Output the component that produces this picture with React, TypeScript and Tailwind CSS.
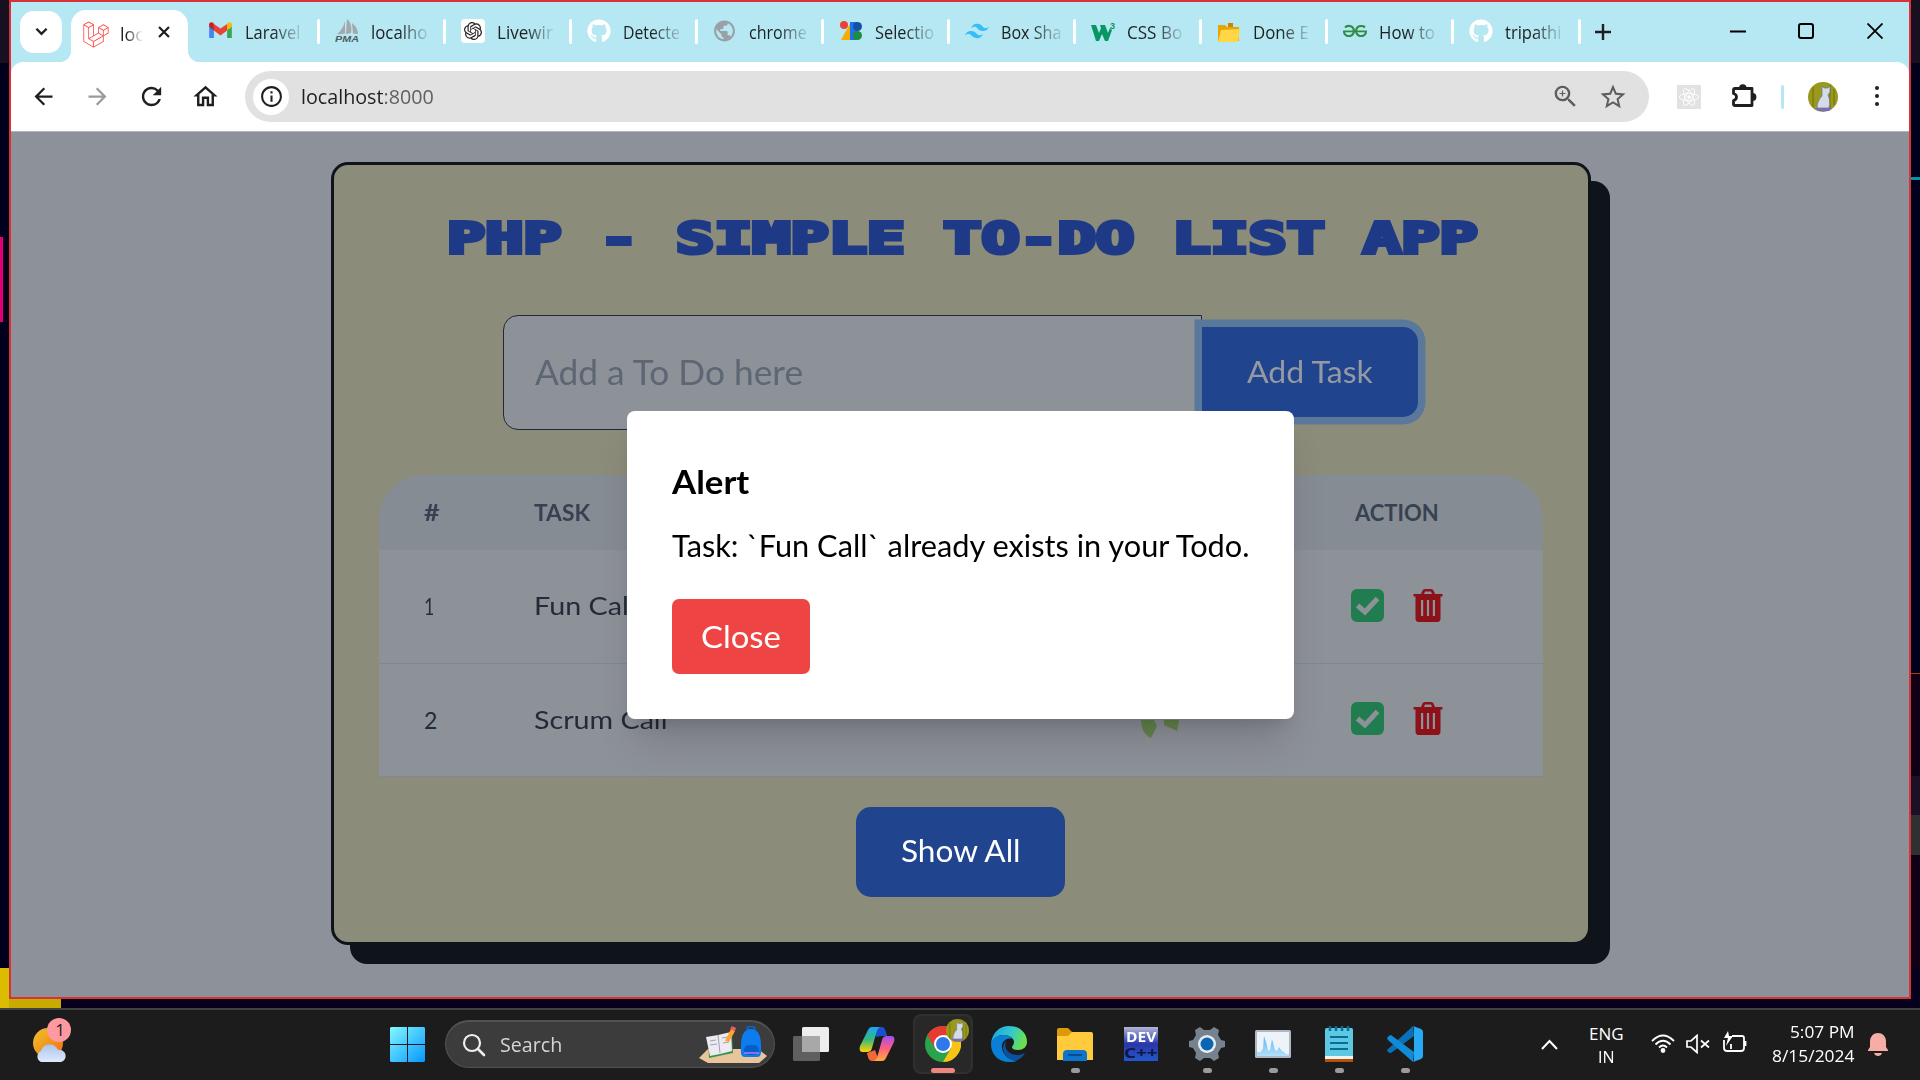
import React, { useLayoutEffect, useRef } from "react";
import { FaLaravel, FaGithub, FaReact } from "react-icons/fa";
import { SiOpenai, SiTailwindcss, SiGeeksforgeeks } from "react-icons/si";
import { MdArrowBack, MdArrowForward, MdRefresh, MdOutlineHome, MdOutlineInfo, MdOutlineZoomIn, MdStarBorder, MdPublic } from "react-icons/md";

const UI = "font-['Open_Sans','Noto_Sans',sans-serif]";

/* Text stretched horizontally so that it fills the width of its box. */
function Fit({ children, className = "" }: { children: React.ReactNode; className?: string }) {
  const outer = useRef<HTMLSpanElement>(null);
  const inner = useRef<HTMLSpanElement>(null);
  useLayoutEffect(() => {
    if (outer.current && inner.current) {
      inner.current.style.transform = `scaleX(${outer.current.clientWidth / inner.current.offsetWidth})`;
    }
  }, []);
  return (
    <span ref={outer} className={`block shrink-0 whitespace-nowrap ${className}`}>
      <span ref={inner} className="inline-block origin-left">{children}</span>
    </span>
  );
}

const Gmail = () => (
  <svg viewBox="0 0 24 18" className="w-[23px] h-[17px]">
    <path d="M0 3v14h5V7z" fill="#4285f4" />
    <path d="M24 3v14h-5V7z" fill="#34a853" />
    <path d="M19 2.2V9l5-4V2.5C24 .3 21.500-.5 19.800.900z" fill="#fbbc04" />
    <path d="M5 9V2l7 5 7-5v7l-7 5.300z" fill="#ea4335" />
    <path d="M0 2.500V5l5 4V2L4.200.900C2.500-.5 0 .3 0 2.500z" fill="#c5221f" />
  </svg>
);

const PhpMyAdmin = () => (
  <svg viewBox="0 0 24 24" className="w-6 h-6">
    <path d="M10 2C9 7 6 12 2 15.500l8-1zM12 0c4 3 5 9 4 14l-5 1zM17 4c4 3 6 7 6 11l-5-.5z" fill="#a4a8aa" />
    <text x="0" y="23" fontSize="9.500" fontWeight="bold" fontStyle="italic" fill="#555b5e" textLength="24" lengthAdjust="spacingAndGlyphs" fontFamily="Liberation Sans">PMA</text>
  </svg>
);

const Web = () => (
  <svg viewBox="0 0 24 24" className="w-6 h-6">
    <circle cx="5" cy="6" r="4" fill="#ea4335" />
    <path d="M2 21 12 3v18z" fill="#f9ab00" />
    <path d="M11 3h7v18h-7z" fill="#1a73e8" />
    <circle cx="18.500" cy="7.500" r="4.500" fill="#174ea6" />
    <circle cx="18.500" cy="16.500" r="4.500" fill="#1e8e3e" />
  </svg>
);

const W3 = () => (
  <svg viewBox="0 0 24 20" className="w-6 h-5">
    <path d="M0 4h5l3 8 2-5-1-3h5l3 8 2-5 2 2-4 11h-3l-3-7-3 7H5z" fill="#059862" />
    <text x="19" y="8" fontSize="9" fontWeight="bold" fill="#059862" fontFamily="Liberation Sans">3</text>
  </svg>
);

const Folder = () => (
  <svg viewBox="0 0 24 20" className="mt-1 w-6 h-5">
    <path d="M1 2h7l2 2h12v14H1z" fill="#e8a400" />
    <path d="M11 0h5v4h-5z" fill="#c98800" />
    <path d="m4 7 19-1-2 13H1z" fill="#ffd645" />
  </svg>
);

const tabs = [
  { name: "Laravel", icon: <Gmail />, w: "w-[55px]" },
  { name: "localho", icon: <PhpMyAdmin />, w: "w-[56px]" },
  { name: "Livewir", icon: <span className="flex w-6 h-6 items-center justify-center rounded bg-white"><SiOpenai className="w-[18px] h-[18px] text-[#222]" /></span>, w: "w-[56px]" },
  { name: "Detecte", icon: <FaGithub className="w-6 h-6 text-white" />, w: "w-[57px]" },
  { name: "chrome", icon: <MdPublic className="w-[26px] h-[26px] -ml-px text-[#9aa0a6]" />, w: "w-[58px]" },
  { name: "Selectio", icon: <Web />, w: "w-[59px]" },
  { name: "Box Sha", icon: <SiTailwindcss className="w-6 h-6 text-[#38bdf8]" />, w: "w-[60px]" },
  { name: "CSS Bo", icon: <W3 />, w: "w-[55px]" },
  { name: "Done E", icon: <Folder />, w: "w-[56px]" },
  { name: "How to", icon: <SiGeeksforgeeks className="w-6 h-6 text-[#2f8d46]" />, w: "w-[56px]" },
  { name: "tripathi", icon: <FaGithub className="w-6 h-6 text-white" />, w: "w-[56px]" },
];

const Cat = ({ className }: { className: string }) => (
  <svg viewBox="0 0 30 30" className={className}>
    <circle cx="15" cy="15" r="15" fill="#99991c" />
    <path d="M5 5v20M22 3v24M26 7v16" stroke="#7d7d10" strokeWidth="1.500" />
    <path d="m14 4 2 2h4l2-2v6l-2 3c2 4 2 8 1 13H9c0-5 2-9 5-12z" fill="#d5dce8" stroke="#6f7f95" strokeWidth=".8" />
    <path d="M7 26h17l-3 3H10z" fill="#7a6cc4" />
  </svg>
);

function TabStrip() {
  return (
    <div className="flex h-[60px] bg-[#b5e8f3] text-[#1f1f1f]">
      <div className="ml-[9px] mt-[9px] flex h-[42px] w-[42px] items-center justify-center rounded-[14px] bg-white">
        <svg viewBox="0 0 14 10" className="w-[13px] h-[10px]"><path d="m1.500 1.500 5.500 5.500 5.500-5.500" fill="none" stroke="#1f1f1f" strokeWidth="2.600" /></svg>
      </div>
      <div className="relative ml-[9px] mt-2 flex h-[52px] w-[117px] items-center rounded-t-[15px] bg-white pl-[12px]">
        <div className="absolute -left-3 bottom-0 h-3 w-3 bg-[radial-gradient(circle_at_0_0,#b5e8f3_12px,#fff_12.500px)]" />
        <div className="absolute -right-3 bottom-0 h-3 w-3 bg-[radial-gradient(circle_at_100%_0,#b5e8f3_12px,#fff_12.500px)]" />
        <FaLaravel className="-mt-1 h-[27px] w-[26px] text-[#ff4a3f]" />
        <Fit className="ml-[11px] w-[24px] -mt-[3px] text-[18px] [mask-image:linear-gradient(90deg,#000_25%,transparent_95%)]">loc</Fit>
        <svg viewBox="0 0 12 12" className="-mt-[8px] ml-[14px] h-3 w-3"><path d="m1 1 10 10M11 1 1 11" stroke="#1f1f1f" strokeWidth="2.200" /></svg>
      </div>
      <div className="ml-[19px] flex">
        {tabs.map((t) => (
          <div key={t.name} className="flex h-[60px] w-[126.050px] items-center">
            <div className="-mt-[3px] ml-[2px] flex w-6 shrink-0 items-center">{t.icon}</div>
            <Fit className={`mt-px ml-3 overflow-hidden text-[18px] [mask-image:linear-gradient(90deg,#000_50%,transparent_108%)] ${t.w}`}>{t.name}</Fit>
            <div className="-mt-[2px] ml-auto mr-[13px] h-[25px] w-[3px] rounded bg-white" />
          </div>
        ))}
      </div>
      <svg viewBox="0 0 16 16" className="mt-[22px] h-4 w-4 ml-[1px]"><path d="M8 0v16M0 8h16" stroke="#1f1f1f" strokeWidth="2.400" /></svg>
      <svg viewBox="0 0 16 16" className="ml-auto mt-[21px] h-4 w-4"><path d="M0 8.500h16" stroke="#000" strokeWidth="2" /></svg>
      <svg viewBox="0 0 16 16" className="ml-[52px] mt-[21px] h-4 w-4"><rect x="1" y="1" width="14" height="14" rx="2" fill="none" stroke="#000" strokeWidth="2" /></svg>
      <svg viewBox="0 0 16 16" className="ml-[53px] mr-[26px] mt-[21px] h-4 w-4"><path d="m.5.5 15 15M15.500.5l-15 15" stroke="#000" strokeWidth="1.800" /></svg>
    </div>
  );
}

const Puzzle = () => (
  <svg viewBox="0 0 26 26" className="ml-[30px] h-[26px] w-[26px]">
    <path d="M4 4.500h17v17H4q-1.500 0-1.500-1.500v-3.500q3-.8 3-3.500t-3-3.500V6Q2.500 4.500 4 4.500z" fill="none" stroke="#1f1f1f" strokeWidth="2.800" strokeLinejoin="round" />
    <path d="M8 4a3.800 3.800 0 0 1 7.600 0zM21.500 9a3.800 3.800 0 0 1 0 7.800z" fill="#1f1f1f" />
  </svg>
);

function Toolbar() {
  return (
    <div className="bg-[#b5e8f3]">
      <div className="flex h-[69px] items-center rounded-t-xl bg-white text-[#1f1f1f]">
        <MdArrowBack className="ml-[19px] h-[27px] w-[27px]" />
        <MdArrowForward className="ml-[27px] h-[27px] w-[27px] text-[#9b9b9b]" />
        <MdRefresh className="ml-[26px] h-[29px] w-[29px]" />
        <MdOutlineHome className="ml-[25px] h-[29px] w-[29px]" />
        <div className="ml-[25px] flex h-[51px] w-[1404px] items-center rounded-full bg-[#e1e1e1] pl-2">
          <div className="flex h-[36px] w-[36px] items-center justify-center rounded-full bg-white"><MdOutlineInfo className="h-[25px] w-[25px]" /></div>
          <Fit className={`ml-3 w-[133px] text-[20px] ${UI}`}>localhost<span className="text-[#5f6062]">:8000</span></Fit>
          <MdOutlineZoomIn className="ml-auto h-[29px] w-[29px] text-[#5c5e61]" />
          <MdStarBorder className="ml-[18px] mr-[21px] h-[30px] w-[30px] text-[#5c5e61]" />
        </div>
        <div className="ml-[28px] flex h-6 w-6 items-center justify-center bg-[#e2e2e2]"><FaReact className="h-5 w-5 text-white" /></div>
        <Puzzle />
        <div className="ml-[24px] h-6 w-[3px] rounded bg-[#b5e8f3]" />
        <Cat className="ml-[24px] h-[30px] w-[30px]" />
        <div className="ml-[37px] -mt-[2px] flex flex-col gap-[4px]">
          <i className="h-[4px] w-[4px] rounded-full bg-[#1f1f1f]" /><i className="h-[4px] w-[4px] rounded-full bg-[#1f1f1f]" /><i className="h-[4px] w-[4px] rounded-full bg-[#1f1f1f]" />
        </div>
      </div>
    </div>
  );
}

const Check = () => (
  <svg viewBox="0 0 33 33" className="-mt-[2px] ml-[4px] h-[33px] w-[33px]">
    <rect width="33" height="33" rx="6" fill="#217d4f" />
    <path d="m6.500 16.500 7.500 6.500L26.500 9.500" fill="none" stroke="#8d9198" strokeWidth="5" />
  </svg>
);

const Trash = () => (
  <svg viewBox="0 0 30 33" className="-mt-[2px] ml-[29px] h-[33px] w-[30px]">
    <path fillRule="evenodd" fill="#8d1119" d="M8 5 9.500 1.500Q10 0 12 0h6q2 0 2.500 1.500L22 5h7.500v2.500H27.500V29q0 4-3 4h-19q-3 0-3-4V7.500H.5V5zM11 5h8l-1-2.500h-6zM8 11v16h2.200V11zm5.900 0v16h2.200V11zm5.900 0v16H22V11z" />
  </svg>
);

const rows = [
  { n: "1", nw: "w-[10px]", task: "Fun Call", w: "w-[101px]", mark: false },
  { n: "2", nw: "w-[13px]", task: "Scrum Call", w: "w-[133px]", mark: true },
];

function TodoCard() {
  return (
    <div className="mt-[30px] ml-[320px] h-[783px] w-[1260px] rounded-[17px] border-[3px] border-[#0f141b] bg-[#8c8c7b] shadow-[19px_19px_0_0_#0f141b]">
      <h1 className="ml-[113px] mt-[44px] h-[61px] font-['DejaVu_Sans_Mono',monospace] text-[42px] leading-[60px] font-bold text-[#1e3a87] [-webkit-text-stroke:4px_#1e3a87]">
        <Fit className="w-[1031px]">PHP - SIMPLE TO-DO LIST APP</Fit>
      </h1>
      <div className="ml-[169px] mt-[45px] flex h-[115px] items-center">
        <div className="flex h-[115px] w-[699px] items-center rounded-l-[15px] border border-[#1e293b] bg-[#8d9198] pl-[31px] pb-[3px] text-[34px] text-[#5d6773]">
          <Fit className="w-[268px]">Add a To Do here</Fit>
        </div>
        <div className="-mt-[2px] flex h-[90px] w-[216px] items-center rounded-r-[15px] bg-[#21448f] pl-[45px] text-[30px] text-[#9499a2] shadow-[0_0_0_7.500px_#5a789c]">
          <Fit className="w-[126px]">Add Task</Fit>
        </div>
      </div>
      <div className="ml-[45px] mt-[45px] w-[1164px] overflow-hidden rounded-t-[45px] bg-[#8d9198]">
        <div className="flex h-[75px] items-center bg-[#868c93] pl-[45px] pb-px text-[22px] font-bold text-[#374151]">
          <Fit className="w-[16px]">#</Fit>
          <Fit className="ml-[94px] w-[56px]">TASK</Fit>
          <Fit className="ml-[765px] w-[84px]">ACTION</Fit>
        </div>
        {rows.map((r) => (
          <div key={r.n} className="flex h-[113.500px] items-center border-b border-[#7f8795] pl-[45px] text-[25px] text-[#222b38]">
            <div className="w-[110px]"><Fit className={`text-[23px] ${r.nw}`}>{r.n}</Fit></div>
            <div className="-mt-px flex w-[813px] items-center">
              <div className="w-[607px]"><Fit className={r.w}>{r.task}</Fit></div>
              {r.mark && (
                <svg viewBox="0 0 40 18" className="mt-[19px] h-[18px] w-10" fill="#66854d"><path d="M0 0h13l3 6-6 12q-5-2-8-8-2-4-2-10zM23 0h15l-2 11-13-6z" /></svg>
              )}
            </div>
            <Check />
            <Trash />
          </div>
        ))}
      </div>
      <div className="ml-[522px] mt-[30px] flex h-[90px] w-[209px] items-center rounded-[15px] bg-[#21448f] pl-[45px] pb-[3px] text-[30px] text-white">
        <Fit className="w-[120px]">Show All</Fit>
      </div>
    </div>
  );
}

function Alert() {
  return (
    <div className="absolute left-[616px] top-[279px] h-[308px] w-[667px] rounded-[8px] bg-white px-[45px] text-black shadow-[0_30px_38px_-8px_rgba(0,0,0,0.14),0_12px_15px_-9px_rgba(0,0,0,0.14)]">
      <h2 className="mt-[46px] text-[33px] leading-[48px] font-bold"><Fit className="w-[77px]">Alert</Fit></h2>
      <p className="mt-[18px] text-[30px] leading-[45px]"><Fit className="w-[578px]">Task: `Fun Call` already exists in your Todo.</Fit></p>
      <div className="mt-[31px] flex h-[75px] w-[138px] items-center rounded-[7px] bg-[#ef4444] pl-[29px] pb-px text-[30px] text-white"><Fit className="w-[80px]">Close</Fit></div>
    </div>
  );
}

const Weather = () => (
  <svg viewBox="0 0 40 46" className="h-[46px] w-[40px]">
    <defs><linearGradient id="sun" x2="1" y2="1"><stop stopColor="#efc52d" /><stop offset="1" stopColor="#f26a0c" /></linearGradient><linearGradient id="cl" y2="1" x2="0"><stop stopColor="#aac4ee" /><stop offset="1" stopColor="#dfe9fb" /></linearGradient></defs>
    <circle cx="15" cy="26" r="15" fill="url(#sun)" />
    <path d="M8 45a6 6 0 0 1 0-11 9 9 0 0 1 17-1 6 6 0 0 1 3 12z" fill="url(#cl)" />
    <circle cx="26" cy="13" r="12" fill="#ff99a0" />
    <text x="27" y="19" textAnchor="middle" fontSize="17" fill="#222" fontFamily="Open Sans">1</text>
  </svg>
);

const Start = () => (
  <svg viewBox="0 0 35 35" className="h-[35px] w-[35px]">
    <defs><linearGradient id="win" gradientUnits="userSpaceOnUse" x2="35" y2="35"><stop stopColor="#84f7ff" /><stop offset="1" stopColor="#0597ff" /></linearGradient></defs>
    <path d="M1 0h16v17H0V1zM18 0h16l1 1v16H18zM0 18h17v17H1l-1-1zM18 18h17v16l-1 1H18z" fill="url(#win)" />
  </svg>
);

const StudyArt = () => (
  <svg viewBox="0 0 68 38" className="h-[38px] w-[68px]">
    <path d="m0 32 9-9h50l9 7-8 7H9z" fill="#e9c59c" />
    <path d="m9 13 24-5 1 19-24 5z" fill="#3a9250" />
    <path d="m7 11 12-2 13-3 1 19-12 3-10 2z" fill="#eeeaf2" />
    <path d="m19 9 2 18M11 15l6-1M11 19l7-1M23 12l6-1M24 17l6-1" stroke="#a39fb5" />
    <path d="m26 15 6-12 4 2-6 11z" fill="#ffa52e" /><path d="m31 3 2-3 4 2-1 3z" fill="#ef5c5c" />
    <path d="M46 31c-5 0-4-5-4-11 0-9 2-17 10-17s10 8 10 17c0 6 1 11-4 11z" fill="#0d7cf0" />
    <path d="M48 4c0-5 8-5 8 0" fill="none" stroke="#0d62d0" strokeWidth="2" /><rect x="45" y="19" width="15" height="10" rx="5" fill="#0460c8" /><path d="M45 27h15" stroke="#b07af5" strokeWidth="1.500" />
  </svg>
);

const TaskView = () => (
  <svg viewBox="0 0 36 34" className="h-[34px] w-[36px]">
    <rect x="9" width="27" height="25" rx="1.500" fill="#ededed" /><rect y="9" width="27" height="25" rx="1.500" fill="#5f5f5f" /><path d="M9 9h18v16H9z" fill="#a8a8a8" />
  </svg>
);

const Copilot = () => (
  <svg viewBox="0 0 36 34" className="h-[34px] w-[36px]">
    <defs><linearGradient id="ca" x2="0" y2="1"><stop stopColor="#1ba8f5" /><stop offset=".5" stopColor="#36b97c" /><stop offset="1" stopColor="#ffd400" /></linearGradient><linearGradient id="cb" x2="0" y2="1"><stop stopColor="#a24df0" /><stop offset=".5" stopColor="#ff5f7e" /><stop offset="1" stopColor="#ffad3b" /></linearGradient></defs>
    <path d="M16 0h7c2 0 3 2 4 5l1 4h-6l-5 1z" fill="#1c4fd0" />
    <path d="M20 34h-7c-3 0-4-3-5-8l8-3z" fill="#f2683c" />
    <path d="M9 3c1-2 2-3 4-3h8c-2 1-3 3-4 7l-4 14c-1 3-2 4-5 4H4c-3 0-4-2-3-6z" fill="url(#ca)" />
    <path d="M27 31c-1 2-2 3-4 3h-8c2-1 3-3 4-7l4-14c1-3 2-4 5-4h4c3 0 4 2 3 6z" fill="url(#cb)" />
  </svg>
);

const Chrome = () => (
  <svg viewBox="0 0 36 36" className="h-[36px] w-[36px]">
    <circle cx="18" cy="18" r="18" fill="#2ba24c" />
    <path d="M2.400 9A18 18 0 0 1 33.600 9H18L10.200 22.500z" fill="#e93a31" />
    <path d="M33.600 9A18 18 0 0 1 18 36l7.800-13.500L18 9z" fill="#fcc216" />
    <circle cx="18" cy="18" r="9" fill="#fff" /><circle cx="18" cy="18" r="7" fill="#2f78ec" />
  </svg>
);

const Edge = () => (
  <svg viewBox="0 0 36 36" className="h-[36px] w-[36px]">
    <defs><linearGradient id="eg" x2="1" y2=".3"><stop stopColor="#169fe0" /><stop offset=".6" stopColor="#35c9cf" /><stop offset="1" stopColor="#68df50" /></linearGradient></defs>
    <path d="M0 18C1 7 8 0 18 0c12 0 18 8 18 16 0 5-4 8-9 8-4 0-6-1-6-3 0-1 2-2 2-5 0-4-5-7-10-7C7 9 2 12 0 18z" fill="url(#eg)" />
    <path d="M0 18c1-6 7-9 13-9 4 0 7 2 9 4-7-2-12 3-11 9 1 8 8 12 15 13-3 1-5 1-8 1C8 36 0 29 0 18z" fill="#0a7fd6" />
    <path d="M15 15c-6 6-3 17 9 20 4-1 8-4 10-8-4 2-9 3-13 1-5-2-8-7-6-13z" fill="#0b51a0" />
  </svg>
);

const Explorer = () => (
  <svg viewBox="0 0 36 33" className="h-[33px] w-[36px]">
    <path d="M0 1.500Q0 0 2 0h9l4 4v7H0z" fill="#dd9a08" /><path d="M0 8h11l4-4h19q2 0 2 2v26H0z" fill="#ffcb3d" />
    <path d="M6 33v-7q0-4 4-4h16q4 0 4 4v7z" fill="#0c75c9" /><path d="M11 27h14" stroke="#064d8e" strokeWidth="2" />
  </svg>
);

const DevCpp = () => (
  <div className="flex h-[34px] w-[34px] flex-col justify-between overflow-hidden bg-linear-to-b from-[#b5b5d5] via-[#2a35a8] to-[#2058cc] pt-[2px] pb-px text-[15px] leading-[15px] font-bold">
    <Fit className="mx-[2px] w-[30px] text-white">DEV</Fit>
    <Fit className="w-[34px] text-[#10173e]">C++</Fit>
  </div>
);

const Gear = () => (
  <svg viewBox="0 0 36 34" className="h-[34px] w-[36px]">
    <path d="m11 0 4 3h6l4-3 5 3-1 5 3 5 4 1v6l-4 1-3 5 1 5-5 3-4-3h-6l-4 3-5-3 1-5-3-5-4-1v-6l4-1 3-5-1-5z" fill="#76828e" />
    <circle cx="18" cy="17" r="9" fill="#e8edf2" /><circle cx="18" cy="17" r="6.500" fill="#0b65b5" />
  </svg>
);

const Monitor = () => (
  <svg viewBox="0 0 36 28" className="h-[28px] w-[36px]">
    <defs><linearGradient id="mon" x2="0" y2="1"><stop stopColor="#5bb8f2" /><stop offset="1" stopColor="#b4dffa" /></linearGradient></defs>
    <rect width="36" height="28" rx="1.500" fill="#aeb8c2" /><path d="M2 2h32v24H2z" fill="#edf3f8" />
    <path d="M2 22h4l2-4 1-12 3 9 1 6 2-1 2-11 3 11 2 1 2-4 3 4 2 1 2 2h3v2H2z" fill="url(#mon)" />
  </svg>
);

const Notepad = () => (
  <svg viewBox="0 0 28 36" className="h-[36px] w-[28px]">
    <rect y="2" width="28" height="30" rx="1.500" fill="#5cc8e2" /><path d="M0 30h28v3H0z" fill="#f2f2f2" /><path d="M0 33h28v3H0z" fill="#b45208" />
    <path d="M5 11h18M5 17h18M5 23h18" stroke="#0b6c96" strokeWidth="2" /><path d="M5 0v5M11 0v5M17 0v5M23 0v5" stroke="#0b6c96" strokeWidth="2.500" />
  </svg>
);

const VsCode = () => (
  <svg viewBox="0 0 36 36" className="h-[36px] w-[36px]">
    <path d="M0 24 26 0l1 10L4 27q-2 0-3-1z" fill="#0a70b8" />
    <path d="M0 12q2-3 4-3l23 17-1 10L1 14z" fill="#128bd6" />
    <path d="M26 0l8 3q2 1 2 3v24q0 2-2 3l-8 3q1-1 1-3V3q0-2-1-3z" fill="#27a9f3" />
  </svg>
);

const apps = [
  { id: "view", icon: <TaskView />, dot: false }, { id: "copilot", icon: <Copilot />, dot: false }, { id: "chrome", icon: <Chrome />, dot: false },
  { id: "edge", icon: <Edge />, dot: false }, { id: "explorer", icon: <Explorer />, dot: true }, { id: "dev", icon: <DevCpp />, dot: false },
  { id: "gear", icon: <Gear />, dot: true }, { id: "monitor", icon: <Monitor />, dot: true }, { id: "notepad", icon: <Notepad />, dot: true }, { id: "code", icon: <VsCode />, dot: true },
];

function Taskbar() {
  return (
    <div className={`flex h-[72px] border-t-2 border-[#424242] bg-[#1c1c1c] text-white ${UI}`}>
      <div className="ml-[33px] mt-[7px]"><Weather /></div>
      <div className="ml-[317px] mt-[17px]"><Start /></div>
      <div className="ml-5 mt-[10px] flex h-[48px] w-[330px] items-center rounded-full border border-t-2 border-[#525252] bg-[#3c3c3c] pl-[16px]">
        <svg viewBox="0 0 24 24" className="h-6 w-6"><circle cx="10" cy="10" r="8" fill="none" stroke="#eee" strokeWidth="2.200" /><path d="m16 16 6 6" stroke="#eee" strokeWidth="2.600" strokeLinecap="round" /></svg>
        <Fit className="ml-[14px] w-[62px] text-[20px] text-[#d5d5d5]">Search</Fit>
        <div className="ml-auto mr-[7px]"><StudyArt /></div>
      </div>
      <div className="ml-[3px] flex">
        {apps.map((a) => (
          <div key={a.id} className="relative flex h-[70px] w-[66px] justify-center">
            <div className={`mt-1 flex h-[60px] w-[60px] items-center justify-center ${a.id === "chrome" ? "rounded-lg border-2 border-[#303030] bg-[#282828]" : ""}`}>{a.icon}</div>
            {a.id === "chrome" && <Cat className="absolute left-[36px] top-[9px] h-[23px] w-[23px]" />}
            {a.id === "chrome" && <div className="absolute bottom-[7px] h-[5px] w-6 rounded-full bg-[#ee8580]" />}
            {a.dot && <div className="absolute bottom-[7px] h-[5px] w-[9px] rounded-full bg-[#9b9b9b]" />}
          </div>
        ))}
      </div>
      <div className="ml-auto flex h-[70px] items-center">
        <svg viewBox="0 0 17 11" className="-mt-[2px] h-[11px] w-[17px]"><path d="m1 10 7.500-8L16 10" fill="none" stroke="#fff" strokeWidth="2" /></svg>
        <div className="-mt-px ml-[31px] flex flex-col items-center text-[17px] leading-[23px]"><Fit className="w-[35px]">ENG</Fit><Fit className="w-[17px]">IN</Fit></div>
        <svg viewBox="0 0 24 19" className="-mt-[3px] ml-[27px] h-[19px] w-6" fill="none" stroke="#fff" strokeWidth="1.800"><path d="M1 7q11-11 22 0M4.500 10.500q7.500-7.500 15 0M8 13.500q4-4 8 0" /><circle cx="12" cy="16.500" r="1.500" fill="#fff" /></svg>
        <svg viewBox="0 0 24 20" className="-mt-[2px] ml-[11px] h-5 w-6" fill="none" stroke="#fff" strokeWidth="1.700"><path d="M1 7h4l6-5.500v17L5 13H1zM15 6.500l8 7M23 6.500l-8 7" /></svg>
        <svg viewBox="0 0 24 22" className="-mt-[6px] ml-[13px] h-[22px] w-6" fill="none" stroke="#fff" strokeWidth="1.800"><path d="M9 5h10q2 0 2 2v10q0 3-3 3H4q-3 0-3-3V9M22.500 10v5M8 13v5" /><path d="m5 0-4 7h4l-2 8 7-10H6z" fill="#fff" stroke="none" /></svg>
        <div className="-mt-[2px] ml-[25px] flex w-[83px] flex-col items-end text-[17px] leading-[24px]"><Fit className="w-[65px]">5:07 PM</Fit><Fit className="w-[83px]">8/15/2024</Fit></div>
        <svg viewBox="0 0 20 24" className="ml-[13px] mr-[32px] h-6 w-5"><path d="M0 18v-1l2-3V8q1-8 8-8t8 8v6l2 3v1zM6 20h8q-1 3-4 3t-4-3z" fill="#f7aca5" /></svg>
      </div>
    </div>
  );
}

export default function App() {
  return (
    <div className={`h-[1080px] w-[1920px] overflow-hidden bg-[#06001c] ${UI}`}>
      <div className="flex h-[1008px]">
        <div className="w-[9px] shrink-0">
          <div className="h-[63px] bg-[#180f20]" />
          <div className="h-[174px] bg-[#00001c]" />
          <div className="h-[85px] w-[3px] bg-[#e00075]" />
          <div className="h-[646px] bg-[#00001c]" />
          <div className="h-[40px] bg-[#dcbc00]" />
        </div>
        <div className="w-[1902px]">
          <div className="relative h-[999px] border-2 border-[#d63238] bg-[#8d9199]">
            <TabStrip />
            <Toolbar />
            <div className="relative h-[866px] border-t border-[#b0b6ba] font-['Lato',sans-serif]">
              <TodoCard />
              <Alert />
            </div>
          </div>
          <div className="h-[9px] w-[52px] bg-[#c9ab00]" />
        </div>
        <div className="w-[9px]">
          <div className="h-[63px] bg-[#180f20]" />
          <div className="h-[114px] bg-[#00001c]" />
          <div className="h-[3px] bg-[#0097a9]" />
          <div className="h-[493px] bg-[#00001c]" />
          <div className="h-px bg-[#b03a10]" />
          <div className="h-[102px] bg-[#0f0015]" />
          <div className="h-[39px] bg-[#1b1026]" />
          <div className="h-[40px] bg-[#303030]" />
          <div className="h-[113px] bg-[#0f0015]" />
        </div>
      </div>
      <Taskbar />
    </div>
  );
}
